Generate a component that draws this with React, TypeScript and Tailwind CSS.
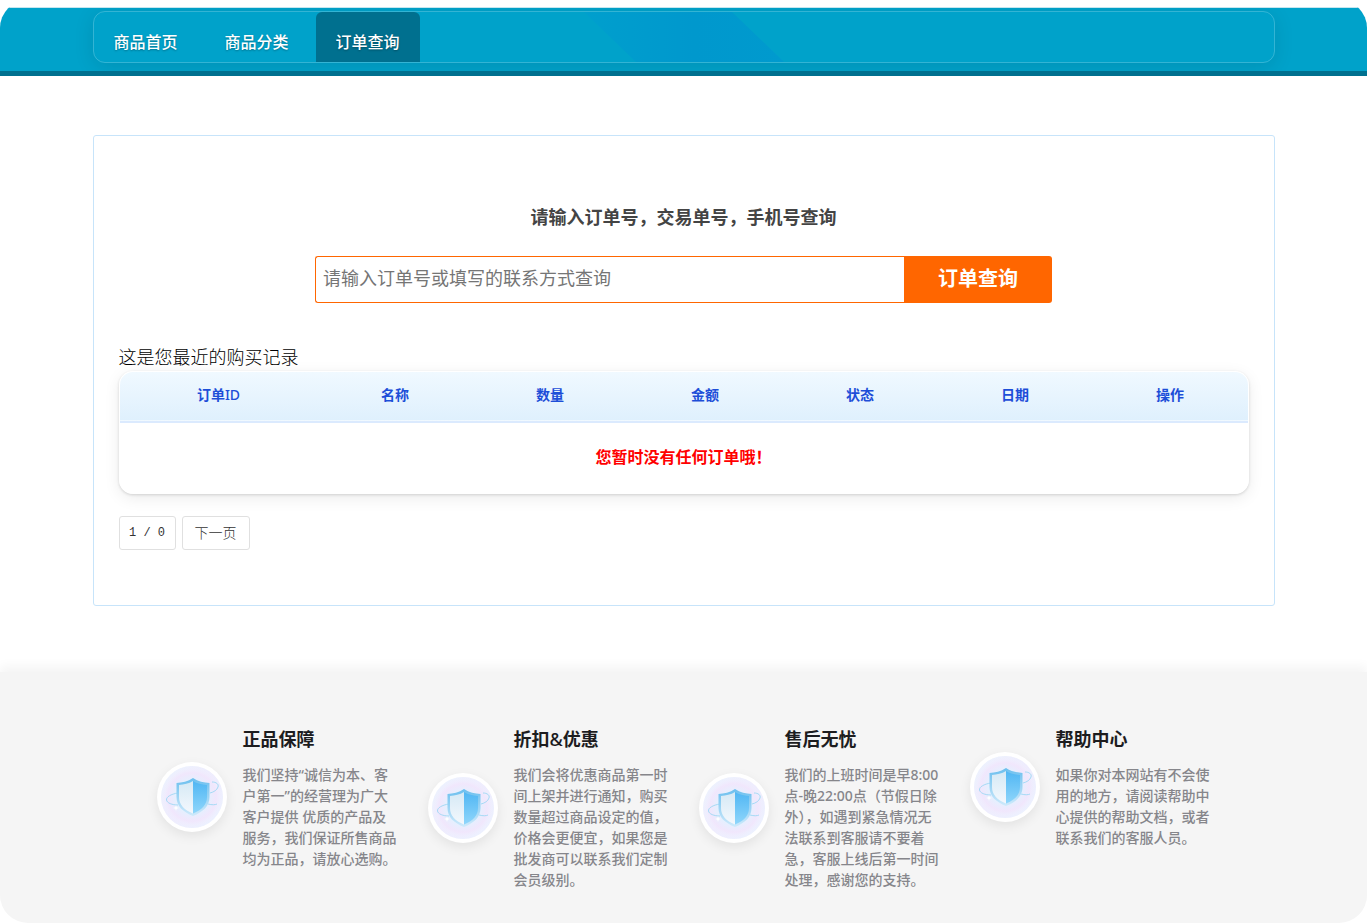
import React from "react";

const navItems = [
  { title: "商品首页", active: false },
  { title: "商品分类", active: false },
  { title: "订单查询", active: true },
];

const columns = ["订单ID", "名称", "数量", "金额", "状态", "日期", "操作"];

const services = [
  {
    title: "正品保障",
    text: "我们坚持“诚信为本、客户第一”的经营理为广大客户提供 优质的产品及服务，我们保证所售商品均为正品，请放心选购。",
  },
  {
    title: "折扣&优惠",
    text: "我们会将优惠商品第一时间上架并进行通知，购买数量超过商品设定的值，价格会更便宜，如果您是批发商可以联系我们定制会员级别。",
  },
  {
    title: "售后无忧",
    text: "我们的上班时间是早8:00点-晚22:00点（节假日除外），如遇到紧急情况无法联系到客服请不要着急，客服上线后第一时间处理，感谢您的支持。",
  },
  {
    title: "帮助中心",
    text: "如果你对本网站有不会使用的地方，请阅读帮助中心提供的帮助文档，或者联系我们的客服人员。",
  },
];

const App = () => {
  return (
    <div className="min-h-screen flex flex-col overflow-hidden rounded-[28px] bg-white pt-[7px] font-['Noto_Sans','Noto_Sans_CJK_SC',sans-serif]">
      <Header />
      <main className="grow px-4 pt-[59px] pb-[48px]">
        <OrderPanel />
      </main>
      <Footer />
    </div>
  );
};

// Latin characters stay regular inside bold Chinese titles
const MixedTitle = ({ text }: { text: string }) => (
  <>
    {text.split(/([A-Z&]+)/).map((part, index) =>
      /[A-Z&]/.test(part) ? (
        <span key={index} className="font-medium">
          {part}
        </span>
      ) : (
        part
      )
    )}
  </>
);

const Header = () => {
  return (
    <header className="overflow-hidden border-t border-t-[#c5e6ef] border-b-[5px] border-b-[#00708f] bg-[#00a2ca] px-4 pt-[3px] pb-2">
      <nav className="relative mx-auto flex h-[52px] max-w-[1182px] gap-[7px] overflow-hidden rounded-xl border border-white/20 shadow-[0_4px_20px_rgba(0,0,0,0.1)]">
        <NavShine />
        {navItems.map((item) => (
          <a
            key={item.title}
            href="#"
            className={`relative flex w-[104px] items-center justify-center rounded-t-md pt-2.5 text-base font-medium text-white [text-shadow:0_1px_2px_rgba(0,0,0,0.3)] ${
              item.active ? "bg-[#00708f]" : ""
            }`}
          >
            {item.title}
          </a>
        ))}
      </nav>
    </header>
  );
};

const NavShine = () => (
  <svg
    className="absolute top-0 left-1/2 h-[50px] w-[200px] -translate-x-1/2"
    viewBox="0 0 200 50"
    aria-hidden="true"
  >
    <defs>
      <linearGradient id="shine" x1="0" x2="1">
        <stop offset="0" stopColor="#009fcd" />
        <stop offset="0.55" stopColor="#0098cd" />
        <stop offset="1" stopColor="#009ace" />
      </linearGradient>
    </defs>
    <path d="M0 0H148L200 50H52Z" fill="url(#shine)" />
  </svg>
);

const OrderPanel = () => {
  return (
    <section className="mx-auto max-w-[1182px] rounded-[3px] border border-[#c7e4fa] px-[25px] pt-[66px] pb-[55px]">
      <form onSubmit={(e) => e.preventDefault()}>
        <label
          htmlFor="order-query"
          className="block text-center text-lg leading-[30px] font-bold text-[#444]"
        >
          请输入订单号，交易单号，手机号查询
        </label>
        <div className="mx-auto mt-6 flex h-[47px] max-w-[737px]">
          <input
            id="order-query"
            type="text"
            placeholder="请输入订单号或填写的联系方式查询"
            className="min-w-0 grow rounded-l-[3px] border border-r-0 border-[#f60] px-[7px] pb-1 text-lg placeholder:text-[#757575] focus:outline-none"
          />
          <button
            type="submit"
            className="w-[148px] rounded-r-[3px] bg-[#f60] pb-0.5 text-xl font-bold text-white"
          >
            订单查询
          </button>
        </div>
      </form>

      <p className="mt-10 text-lg leading-7 font-light text-black">
        这是您最近的购买记录
      </p>
      <OrderTable />

      {/* Pager */}
      <div className="mt-[22px] flex gap-1.5 font-light text-[#333]">
        <span className="flex h-[34px] w-[57px] items-center justify-center rounded-[3px] border border-[#e0e0e0] font-['Liberation_Mono',monospace] text-xs">
          1 / 0
        </span>
        <a
          href="#"
          className="flex h-[34px] items-center rounded-[3px] border border-[#e0e0e0] px-3 text-sm"
        >
          下一页
        </a>
      </div>
    </section>
  );
};

const OrderTable = () => {
  return (
    <div className="overflow-hidden rounded-[14px] border border-white shadow-[0_4px_16px_rgba(0,0,0,0.08),0_1px_3px_rgba(0,0,0,0.14)]">
      <table className="w-full table-fixed">
        <thead>
          <tr className="border-b-2 border-[#dbeafe] bg-linear-to-b from-[#f0f9ff] to-[#dff0fd]">
            {columns.map((name) => (
              <th
                key={name}
                className="h-[50px] pb-1 text-center text-sm font-bold text-[#1d4ed8] first:w-[198px]"
              >
                <MixedTitle text={name} />
              </th>
            ))}
          </tr>
        </thead>
        <tbody>
          <tr>
            <td
              colSpan={7}
              className="h-[71px] pb-0.5 text-center text-base font-bold text-[#f00]"
            >
              您暂时没有任何订单哦！
            </td>
          </tr>
        </tbody>
      </table>
    </div>
  );
};

const Footer = () => {
  return (
    <footer className="bg-[#f5f5f5] px-4 pt-[53px] pb-[33px] shadow-[0_-6px_10px_#f5f5f5]">
      <div className="mx-auto grid max-w-[1084px] grid-cols-1 items-start gap-y-8 sm:grid-cols-2 lg:grid-cols-4">
        {services.map((item) => (
          <div key={item.title} className="flex items-center gap-4 px-[15px]">
            <div className="flex size-[70px] shrink-0 items-center justify-center rounded-full bg-white shadow-[0_4px_12px_rgba(0,0,0,0.08)]">
              <ShieldIcon />
            </div>
            <div>
              <h3 className="text-lg leading-7 font-bold text-[#1d1d1f]">
                <MixedTitle text={item.title} />
              </h3>
              <p className="mt-[11px] text-sm leading-[21px] font-medium text-[#86868b]">
                {item.text}
              </p>
            </div>
          </div>
        ))}
      </div>
    </footer>
  );
};

const ShieldIcon = () => (
  <svg className="size-[62px]" viewBox="0 0 62 62" aria-hidden="true">
    <defs>
      <linearGradient id="base" x1="0" y1="0" x2="1" y2="1">
        <stop offset="0" stopColor="#eaf3fe" />
        <stop offset="0.5" stopColor="#eeeafd" />
        <stop offset="1" stopColor="#e9f2ff" />
      </linearGradient>
      <radialGradient id="halo" cx="0.5" cy="0.5" r="0.5">
        <stop offset="0" stopColor="#e0f1fd" />
        <stop offset="0.55" stopColor="#e6effe" />
        <stop offset="0.78" stopColor="#f1e6fc" stopOpacity="0.9" />
        <stop offset="1" stopColor="#f1f4ff" stopOpacity="0.2" />
      </radialGradient>
      <linearGradient id="edge" x1="0" y1="0" x2="0" y2="1">
        <stop offset="0" stopColor="#6bbfee" />
        <stop offset="1" stopColor="#cfeafb" />
      </linearGradient>
      <linearGradient id="left" x1="0" y1="0" x2="0" y2="1">
        <stop offset="0" stopColor="#d5e9f5" />
        <stop offset="1" stopColor="#f4f8fd" />
      </linearGradient>
      <linearGradient id="right" x1="0" y1="0" x2="0" y2="1">
        <stop offset="0" stopColor="#50b6f3" />
        <stop offset="1" stopColor="#8fd6fb" />
      </linearGradient>
    </defs>
    <circle cx="31" cy="31" r="31" fill="url(#base)" />
    <circle cx="31" cy="31" r="31" fill="url(#halo)" />
    <path
      d="M17 27C10 28 5 31 5.500 34C6 37 11 39 17 39"
      fill="none"
      stroke="#a5daf6"
      strokeWidth="1"
    />
    <path
      d="M51 16C55 16 58 18 57 21C56 24 53 26 49 27M47 38C51 39 54 39 56 38"
      fill="none"
      stroke="#a5daf6"
      strokeWidth="1"
    />
    <path
      d="M32 12C27 15.500 21 16.500 15.500 17V31C15.500 40 22 46 32 50C42 46 48.500 40 48.500 31V17C43 16.500 37 15.500 32 12Z"
      fill="url(#edge)"
    />
    <path
      d="M32 15C28 17.500 23 18.700 18 19V31C18 38.500 23 44 32 47.500Z"
      fill="url(#left)"
    />
    <path
      d="M32 15C36 17.500 41 18.700 46 19V31C46 38.500 41 44 32 47.500Z"
      fill="url(#right)"
    />
    <path
      d="M15 39L15.700 41.300L18 42L15.700 42.700L15 45L14.300 42.700L12 42L14.300 41.300Z"
      fill="#fff"
    />
  </svg>
);

export default App;
